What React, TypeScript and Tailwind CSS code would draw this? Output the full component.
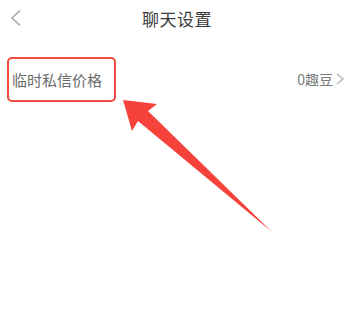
import React from "react";

export default function App() {
  const font = { fontFamily: '"Noto Sans CJK SC", "Noto Sans", sans-serif' };
  return (
    <div className="relative w-[354px] h-[325px] bg-white overflow-hidden" style={font}>
      <div className="relative h-[36px] flex items-center justify-center">
        <svg className="absolute left-[9px] top-[9px]" width="14" height="18" viewBox="0 0 14 18">
          <path d="M11 1.5 L3 9 L11 16.5" fill="none" stroke="#a8a8a8" strokeWidth="1.6" />
        </svg>
        <span className="text-[17px] leading-none text-[#3a3a3a] tracking-[0.5px]">聊天设置</span>
      </div>
      <div className="h-[86px] flex items-center justify-between pl-[12px] pr-[9px]">
        <span className="text-[15px] leading-none text-[#6a6a6a]">临时私信价格</span>
        <div className="flex items-center gap-[2px]">
          <span className="text-[14px] leading-none text-[#7a7a7a]">0趣豆</span>
          <svg width="10" height="14" viewBox="0 0 10 14">
            <path d="M2 2 L8 7 L2 12" fill="none" stroke="#b5b5b5" strokeWidth="1.4" />
          </svg>
        </div>
      </div>
      <div className="absolute left-[7px] top-[57px] w-[109px] h-[45px] border-[2.5px] border-[#f04a42] rounded-[5px]" />
      <svg className="absolute left-0 top-0" width="354" height="325" viewBox="0 0 354 325">
        <polygon points="123,100 157,104 148,111 272,232 138,121 132,131" fill="#f5423a" />
      </svg>
    </div>
  );
}
